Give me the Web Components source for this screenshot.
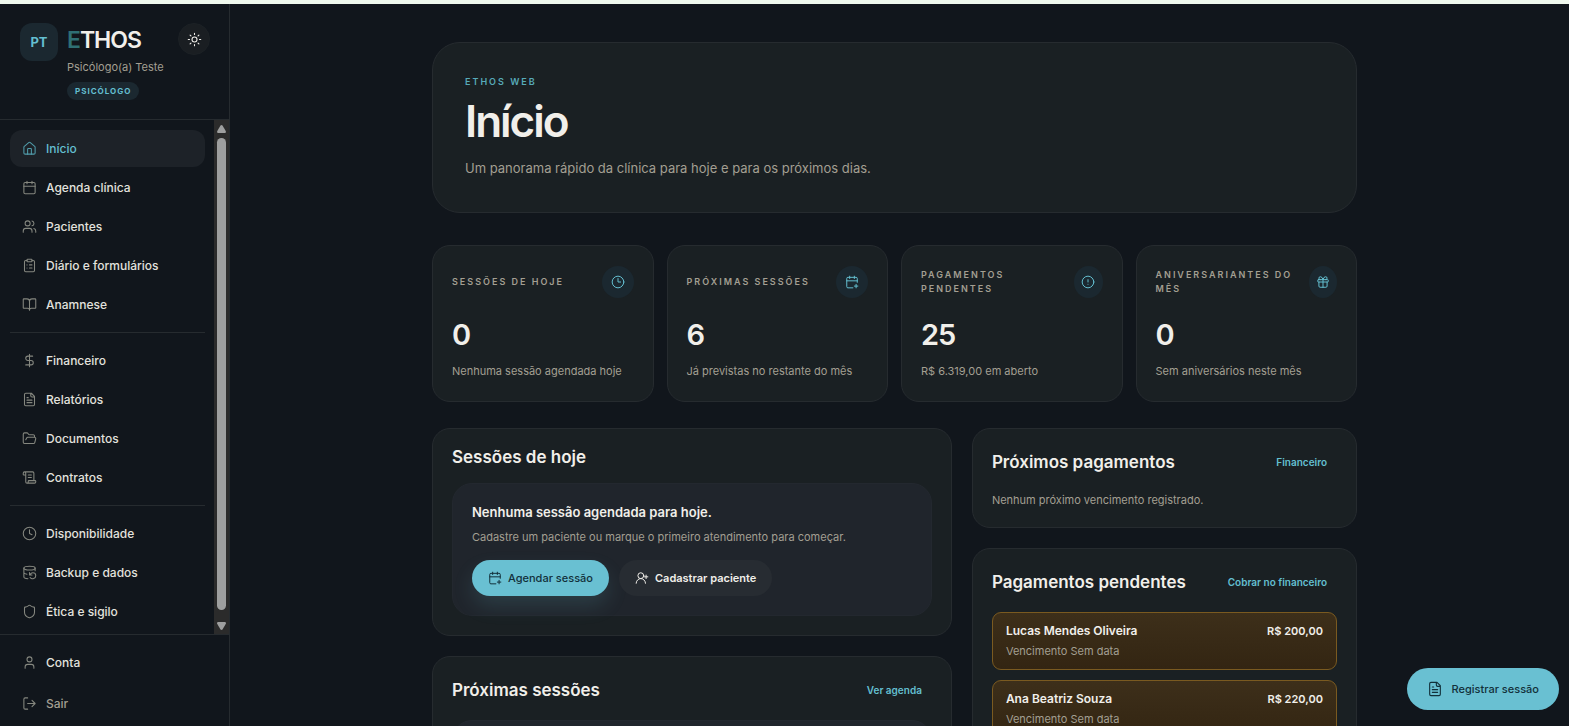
<!DOCTYPE html>
<html lang="pt-BR">
<head>
<meta charset="utf-8">
<meta name="viewport" content="width=device-width, initial-scale=1">
<title>ETHOS</title>
<style>
    :root {
        --bg: #11161c;
        --card: #1a2023;
        --inset: #20252c;
        --line: #262b2f;
        --text: #f1efea;
        --muted: #a39f92;
        --accent: #64bfd0;
        --tint: #1b2830;
        font-family: Inter, "Liberation Sans", sans-serif;
        color: var(--text);
        background: var(--bg);
    }
    body { margin: 0; }
</style>
</head>
<body>
<ethos-app>
    <side-bar slot="side">
        <nav-link icon="house" active>Início</nav-link>
        <nav-link icon="calendar">Agenda clínica</nav-link>
        <nav-link icon="users">Pacientes</nav-link>
        <nav-link icon="clipboard">Diário e formulários</nav-link>
        <nav-link icon="book">Anamnese</nav-link>
        <hr>
        <nav-link icon="dollar">Financeiro</nav-link>
        <nav-link icon="file">Relatórios</nav-link>
        <nav-link icon="folder">Documentos</nav-link>
        <nav-link icon="scroll">Contratos</nav-link>
        <hr>
        <nav-link icon="clock-4">Disponibilidade</nav-link>
        <nav-link icon="backup">Backup e dados</nav-link>
        <nav-link icon="shield">Ética e sigilo</nav-link>
        <nav-link slot="footer" icon="user">Conta</nav-link>
        <nav-link slot="footer" icon="logout" quiet>Sair</nav-link>
    </side-bar>

    <page-hero eyebrow="ETHOS WEB" heading="Início">Um panorama rápido da clínica para hoje e para os próximos dias.</page-hero>

    <stat-grid>
        <stat-card icon="clock-3" label="Sessões de hoje" value="0">Nenhuma sessão agendada hoje</stat-card>
        <stat-card icon="calendar-plus" label="Próximas sessões" value="6">Já previstas no restante do mês</stat-card>
        <stat-card icon="alert" label="Pagamentos pendentes" value="25">R$ 6.319,00 em aberto</stat-card>
        <stat-card icon="gift" label="Aniversariantes do mês" value="0">Sem aniversários neste mês</stat-card>
    </stat-grid>

    <panel-columns>
        <panel-card slot="left" heading="Sessões de hoje">
            <empty-state heading="Nenhuma sessão agendada para hoje.">
                Cadastre um paciente ou marque o primeiro atendimento para começar.
                <pill-button slot="actions" icon="calendar-plus" primary>Agendar sessão</pill-button>
                <pill-button slot="actions" icon="user-plus">Cadastrar paciente</pill-button>
            </empty-state>
        </panel-card>
        <panel-card slot="left" heading="Próximas sessões" link="Ver agenda">
            <empty-state></empty-state>
        </panel-card>
        <panel-card slot="right" heading="Próximos pagamentos" link="Financeiro">Nenhum próximo vencimento registrado.</panel-card>
        <panel-card slot="right" heading="Pagamentos pendentes" link="Cobrar no financeiro">
            <payment-item name="Lucas Mendes Oliveira" amount="R$ 200,00">Vencimento Sem data</payment-item>
            <payment-item name="Ana Beatriz Souza" amount="R$ 220,00">Vencimento Sem data</payment-item>
        </panel-card>
    </panel-columns>

    <pill-button slot="fab" icon="file" primary large>Registrar sessão</pill-button>
</ethos-app>

<script>
    const ICONS = {
        house: `<path d="M15 21v-8a1 1 0 0 0-1-1h-4a1 1 0 0 0-1 1v8"/><path d="M3 10a2 2 0 0 1 .7-1.5l7-6a2 2 0 0 1 2.6 0l7 6A2 2 0 0 1 21 10v9a2 2 0 0 1-2 2H5a2 2 0 0 1-2-2z"/>`,
        calendar: `<path d="M8 2v4M16 2v4M3 10h18"/><rect width="18" height="18" x="3" y="4" rx="2"/>`,
        "calendar-plus": `<path d="M16 19h6M19 16v6M16 2v4M8 2v4M3 10h18M21 12.6V6a2 2 0 0 0-2-2H5a2 2 0 0 0-2 2v14a2 2 0 0 0 2 2h8.5"/>`,
        users: `<path d="M16 21v-2a4 4 0 0 0-4-4H6a4 4 0 0 0-4 4v2M16 3.1a4 4 0 0 1 0 7.8M22 21v-2a4 4 0 0 0-3-3.9"/><circle cx="9" cy="7" r="4"/>`,
        clipboard: `<rect width="8" height="4" x="8" y="2" rx="1"/><path d="M16 4h2a2 2 0 0 1 2 2v14a2 2 0 0 1-2 2H6a2 2 0 0 1-2-2V6a2 2 0 0 1 2-2h2M12 11h4M12 16h4M8 11h.01M8 16h.01"/>`,
        book: `<path d="M12 7v14M3 18a1 1 0 0 1-1-1V4a1 1 0 0 1 1-1h5a4 4 0 0 1 4 4 4 4 0 0 1 4-4h5a1 1 0 0 1 1 1v13a1 1 0 0 1-1 1h-6a3 3 0 0 0-3 3 3 3 0 0 0-3-3z"/>`,
        dollar: `<path d="M12 2v20M17 5H9.5a3.5 3.5 0 0 0 0 7h5a3.5 3.5 0 0 1 0 7H6"/>`,
        file: `<path d="M15 2H6a2 2 0 0 0-2 2v16a2 2 0 0 0 2 2h12a2 2 0 0 0 2-2V7zM14 2v4a2 2 0 0 0 2 2h4M10 9H8M16 13H8M16 17H8"/>`,
        folder: `<path d="m6 14 1.5-2.9A2 2 0 0 1 9.24 10H20a2 2 0 0 1 1.94 2.5l-1.54 6a2 2 0 0 1-1.95 1.5H4a2 2 0 0 1-2-2V5a2 2 0 0 1 2-2h3.9a2 2 0 0 1 1.69.9l.81 1.2a2 2 0 0 0 1.67.9H18a2 2 0 0 1 2 2v2"/>`,
        scroll: `<path d="M15 12h-5M15 8h-5M19 17V5a2 2 0 0 0-2-2H4M8 21h12a2 2 0 0 0 2-2v-1a1 1 0 0 0-1-1H11a1 1 0 0 0-1 1v1a2 2 0 1 1-4 0V5a2 2 0 1 0-4 0v2a1 1 0 0 0 1 1h3"/>`,
        "clock-3": `<circle cx="12" cy="12" r="10"/><path d="M12 6v6h4.5"/>`,
        "clock-4": `<circle cx="12" cy="12" r="10"/><path d="M12 6v6l4 2"/>`,
        backup: `<ellipse cx="12" cy="5" rx="9" ry="3"/><path d="M3 12a9 3 0 0 0 5 2.69M21 9.3V5M3 5v14a9 3 0 0 0 6.47 2.88M12 12v4h4M13 20a5 5 0 0 0 9-3 4.5 4.5 0 0 0-4.5-4.5c-1.33 0-2.54.54-3.41 1.41L12 16"/>`,
        shield: `<path d="M20 13c0 5-3.5 7.5-7.66 8.95a1 1 0 0 1-.67-.01C7.5 20.5 4 18 4 13V6a1 1 0 0 1 1-1c2 0 4.5-1.2 6.24-2.72a1.17 1.17 0 0 1 1.52 0C14.51 3.81 17 5 19 5a1 1 0 0 1 1 1z"/>`,
        user: `<path d="M19 21v-2a4 4 0 0 0-4-4H9a4 4 0 0 0-4 4v2"/><circle cx="12" cy="7" r="4"/>`,
        "user-plus": `<path d="M2 21a8 8 0 0 1 16 0M19 7v6M22 10h-6"/><circle cx="10" cy="8" r="5"/>`,
        logout: `<path d="M9 21H5a2 2 0 0 1-2-2V5a2 2 0 0 1 2-2h4M16 17l5-5-5-5M21 12H9"/>`,
        alert: `<circle cx="12" cy="12" r="10"/><path d="M12 8v4M12 16h.01"/>`,
        gift: `<rect x="3" y="8" width="18" height="4" rx="1"/><path d="M12 8v13M19 12v7a2 2 0 0 1-2 2H7a2 2 0 0 1-2-2v-7M7.5 8a2.5 2.5 0 0 1 0-5A4.8 8 0 0 1 12 8a4.8 8 0 0 1 4.5-5 2.5 2.5 0 0 1 0 5"/>`,
        sun: `<circle cx="12" cy="12" r="4"/><path d="M12 2v2M12 20v2M4.93 4.93l1.41 1.41M17.66 17.66l1.41 1.41M2 12h2M20 12h2M6.34 17.66l-1.41 1.41M19.07 4.93l-1.41 1.41"/>`
    };

    // define an element whose shadow root is filled once, from its attributes
    const define = (name, render) => customElements.define(
        name,
        class extends HTMLElement {
            connectedCallback() {
                if (this.shadowRoot) return;
                this.attachShadow({ mode: "open" })
                    .innerHTML = render((attr) => this.getAttribute(attr) || "");
            }
        }
    );

    define("ui-icon", (attr) => `
        <style>
            :host { display: inline-flex; flex: none; width: 15px; height: 15px; }
            svg { width: 100%; height: 100%; fill: none; stroke: currentColor; stroke-width: 1.7; stroke-linecap: round; stroke-linejoin: round; }
        </style>
        <svg viewBox="0 0 24 24" aria-hidden="true">${ICONS[attr("name")]}</svg>`);

    define("ethos-app", () => `
        <style>
            :host { display: grid; grid-template-columns: 230px 1fr; height: 100vh; box-sizing: border-box; border-top: 4px solid #eff8ed; }
            main { overflow-y: auto; scrollbar-width: none; padding: 38px 10px 38px 0; }
            .content { display: flex; flex-direction: column; width: 80%; max-width: 925px; margin: 0 auto; }
            .fab { position: fixed; right: 10px; bottom: 16px; }
        </style>
        <slot name="side"></slot>
        <main><div class="content"><slot></slot></div></main>
        <div class="fab"><slot name="fab"></slot></div>`);

    define("side-bar", () => `
        <style>
            :host { display: flex; flex-direction: column; min-height: 0; border-right: 1px solid var(--line); }
            header { display: flex; align-items: flex-start; gap: 9px; padding: 19px 19px 19px 20px; border-bottom: 1px solid var(--line); }
            .avatar { flex: none; display: grid; place-items: center; width: 38px; height: 38px; border-radius: 12px; background: var(--tint); color: var(--accent); font-size: 13px; font-weight: 700; }
            .who { flex: 1; display: flex; flex-direction: column; align-items: flex-start; white-space: nowrap; }
            .brand { font-size: 23px; line-height: 34px; font-weight: 600; letter-spacing: -1px; }
            .brand span { color: #2f7074; }
            .name { font-size: 11px; line-height: 20px; color: var(--muted); }
            .role { margin-top: 5px; padding: 0 8px; border-radius: 9px; background: var(--tint); color: var(--accent); font-size: 8px; line-height: 18px; font-weight: 700; letter-spacing: 1px; }
            button { flex: none; display: grid; place-items: center; width: 32px; height: 32px; padding: 0; border: 1px solid #1c2125; border-radius: 50%; background: #1a1e22; color: var(--text); }
            .body { flex: 1; display: flex; min-height: 0; }
            nav { flex: 1; overflow: hidden; display: flex; flex-direction: column; gap: 2px; padding: 10px 9px 0 10px; }
            ::slotted(hr) { width: 100%; margin: 7px 0; border: 0; border-top: 1px solid var(--line); }
            footer { display: flex; flex-direction: column; gap: 4px; padding: 9px 10px 4px; border-top: 1px solid var(--line); }
        </style>
        <header>
            <div class="avatar">PT</div>
            <div class="who">
                <div class="brand"><span>E</span>THOS</div>
                <div class="name">Psicólogo(a) Teste</div>
                <div class="role">PSICÓLOGO</div>
            </div>
            <button aria-label="Tema"><ui-icon name="sun"></ui-icon></button>
        </header>
        <div class="body">
            <nav><slot></slot></nav>
            <scroll-track></scroll-track>
        </div>
        <footer><slot name="footer"></slot></footer>`);

    define("scroll-track", () => `
        <style>
            :host { display: flex; flex-direction: column; align-items: center; gap: 5px; width: 15px; padding: 5px 0 4px; box-sizing: border-box; background: #2b2b2b; }
            .thumb { flex: 1; width: 9px; border-radius: 5px; background: #9e9f9f; }
            svg { width: 9px; height: 8px; fill: #9e9f9f; }
            .end { margin-top: 7px; }
        </style>
        <svg viewBox="0 0 9 8"><path d="M4.5 0 5.5.5 9 6.5 8.5 8H.5L0 6.5 3.5.5z"/></svg>
        <div class="thumb"></div>
        <svg class="end" viewBox="0 0 9 8"><path d="M4.5 8 5.5 7.5 9 1.5 8.5 0H.5L0 1.5 3.5 7.5z"/></svg>`);

    define("nav-link", (attr) => `
        <style>
            :host { display: block; flex: none; }
            a { display: flex; align-items: center; gap: 9px; height: 37px; padding: 0 12px; border-radius: 12px; color: #e3e2de; font-size: 12px; font-weight: 500; text-decoration: none; }
            ui-icon { color: #85877f; }
            :host([active]) a { background: #1d2228; color: var(--accent); }
            :host([active]) ui-icon { color: #509ba9; }
            :host([quiet]) a { color: var(--muted); }
        </style>
        <a href="#"><ui-icon name="${attr("icon")}"></ui-icon><slot></slot></a>`);

    define("page-hero", (attr) => `
        <style>
            :host { display: block; padding: 32px; border: 1px solid var(--line); border-radius: 28px; background: var(--card); }
            .eyebrow { color: #57aab9; font-size: 9px; line-height: 14px; font-weight: 600; letter-spacing: 2px; }
            h1 { margin: 9px 0 13px; font-size: 44px; line-height: 46px; font-weight: 600; letter-spacing: -2px; }
            p { margin: 0; color: var(--muted); font-size: 13px; line-height: 23px; }
        </style>
        <div class="eyebrow">${attr("eyebrow")}</div>
        <h1>${attr("heading")}</h1>
        <p><slot></slot></p>`);

    define("stat-grid", () => `
        <style>
            :host { display: grid; grid-template-columns: repeat(4, 1fr); gap: 13px; margin: 32px 0 26px; }
        </style>
        <slot></slot>`);

    define("stat-card", (attr) => `
        <style>
            :host { display: block; padding: 19px 19px 20px; border: 1px solid var(--line); border-radius: 18px; background: var(--card); }
            header { display: flex; align-items: center; justify-content: space-between; gap: 10px; height: 33px; }
            .label { color: var(--muted); font-size: 9px; line-height: 14px; font-weight: 600; letter-spacing: 2px; text-transform: uppercase; }
            .badge { display: grid; place-items: center; width: 32px; height: 32px; border-radius: 50%; background: var(--tint); color: var(--accent); }
            ui-icon { width: 14px; height: 14px; }
            .value { margin: 19px 0 9px; font-size: 29px; line-height: 36px; font-weight: 600; letter-spacing: -1px; }
            p { margin: 0; color: var(--muted); font-size: 11px; line-height: 19px; }
        </style>
        <header>
            <div class="label">${attr("label")}</div>
            <div class="badge"><ui-icon name="${attr("icon")}"></ui-icon></div>
        </header>
        <div class="value">${attr("value")}</div>
        <p><slot></slot></p>`);

    define("panel-columns", () => `
        <style>
            :host { display: grid; grid-template-columns: 27fr 20fr; gap: 20px; align-items: start; }
            div { display: flex; flex-direction: column; gap: 20px; }
        </style>
        <div><slot name="left"></slot></div>
        <div><slot name="right"></slot></div>`);

    define("panel-card", (attr) => `
        <style>
            :host { display: block; padding: 19px; border: 1px solid var(--line); border-radius: 18px; background: var(--card); }
            header { display: flex; align-items: center; justify-content: space-between; margin-bottom: 16px; }
            h2 { margin: 0; font-size: 17px; line-height: 19px; font-weight: 600; }
            a { padding: 0 10px; color: var(--accent); font-size: 10px; line-height: 28px; font-weight: 600; text-decoration: none; }
            .body { color: var(--muted); font-size: 11px; line-height: 16px; }
        </style>
        <header>
            <h2>${attr("heading")}</h2>
            ${attr("link") && `<a href="#">${attr("link")}</a>`}
        </header>
        <div class="body"><slot></slot></div>`);

    define("empty-state", (attr) => `
        <style>
            :host { display: block; min-height: 93px; padding: 19px; border: 1px solid #23282f; border-radius: 20px; background: var(--inset); }
            h3 { margin: 0 0 8px; color: var(--text); font-size: 13px; line-height: 18px; font-weight: 600; }
            .actions { display: flex; gap: 10px; margin-top: 15px; }
        </style>
        ${attr("heading") && `<h3>${attr("heading")}</h3>`}
        <slot></slot>
        <div class="actions"><slot name="actions"></slot></div>`);

    define("pill-button", (attr) => `
        <style>
            :host { display: block; }
            button { display: flex; align-items: center; gap: 6px; height: 36px; padding: 0 16px; border: 0; border-radius: 21px; background: #272c32; color: var(--text); font: 600 11px Inter, "Liberation Sans", sans-serif; white-space: nowrap; }
            ui-icon { width: 14px; height: 14px; }
            :host([primary]) button { background: #69c0d2; color: #12303a; font-weight: 500; box-shadow: 0 10px 20px #69c0d226; }
            :host([large]) button { gap: 9px; height: 42px; padding: 0 20px; box-shadow: none; }
            :host([large]) ui-icon { width: 16px; height: 16px; }
        </style>
        <button><ui-icon name="${attr("icon")}"></ui-icon><slot></slot></button>`);

    define("payment-item", (attr) => `
        <style>
            :host { display: block; margin: 1px 0 10px; padding: 9px 13px; border: 1px solid #7a5a20; border-radius: 9px; background: linear-gradient(#3d2f1a, #332512); }
            .row { display: flex; justify-content: space-between; color: var(--text); font-size: 12px; line-height: 18px; font-weight: 600; }
            .amount { font-size: 11px; }
            .due { margin-top: 2px; line-height: 18px; }
        </style>
        <div class="row"><span>${attr("name")}</span><span class="amount">${attr("amount")}</span></div>
        <div class="due"><slot></slot></div>`);
</script>
</body>
</html>
